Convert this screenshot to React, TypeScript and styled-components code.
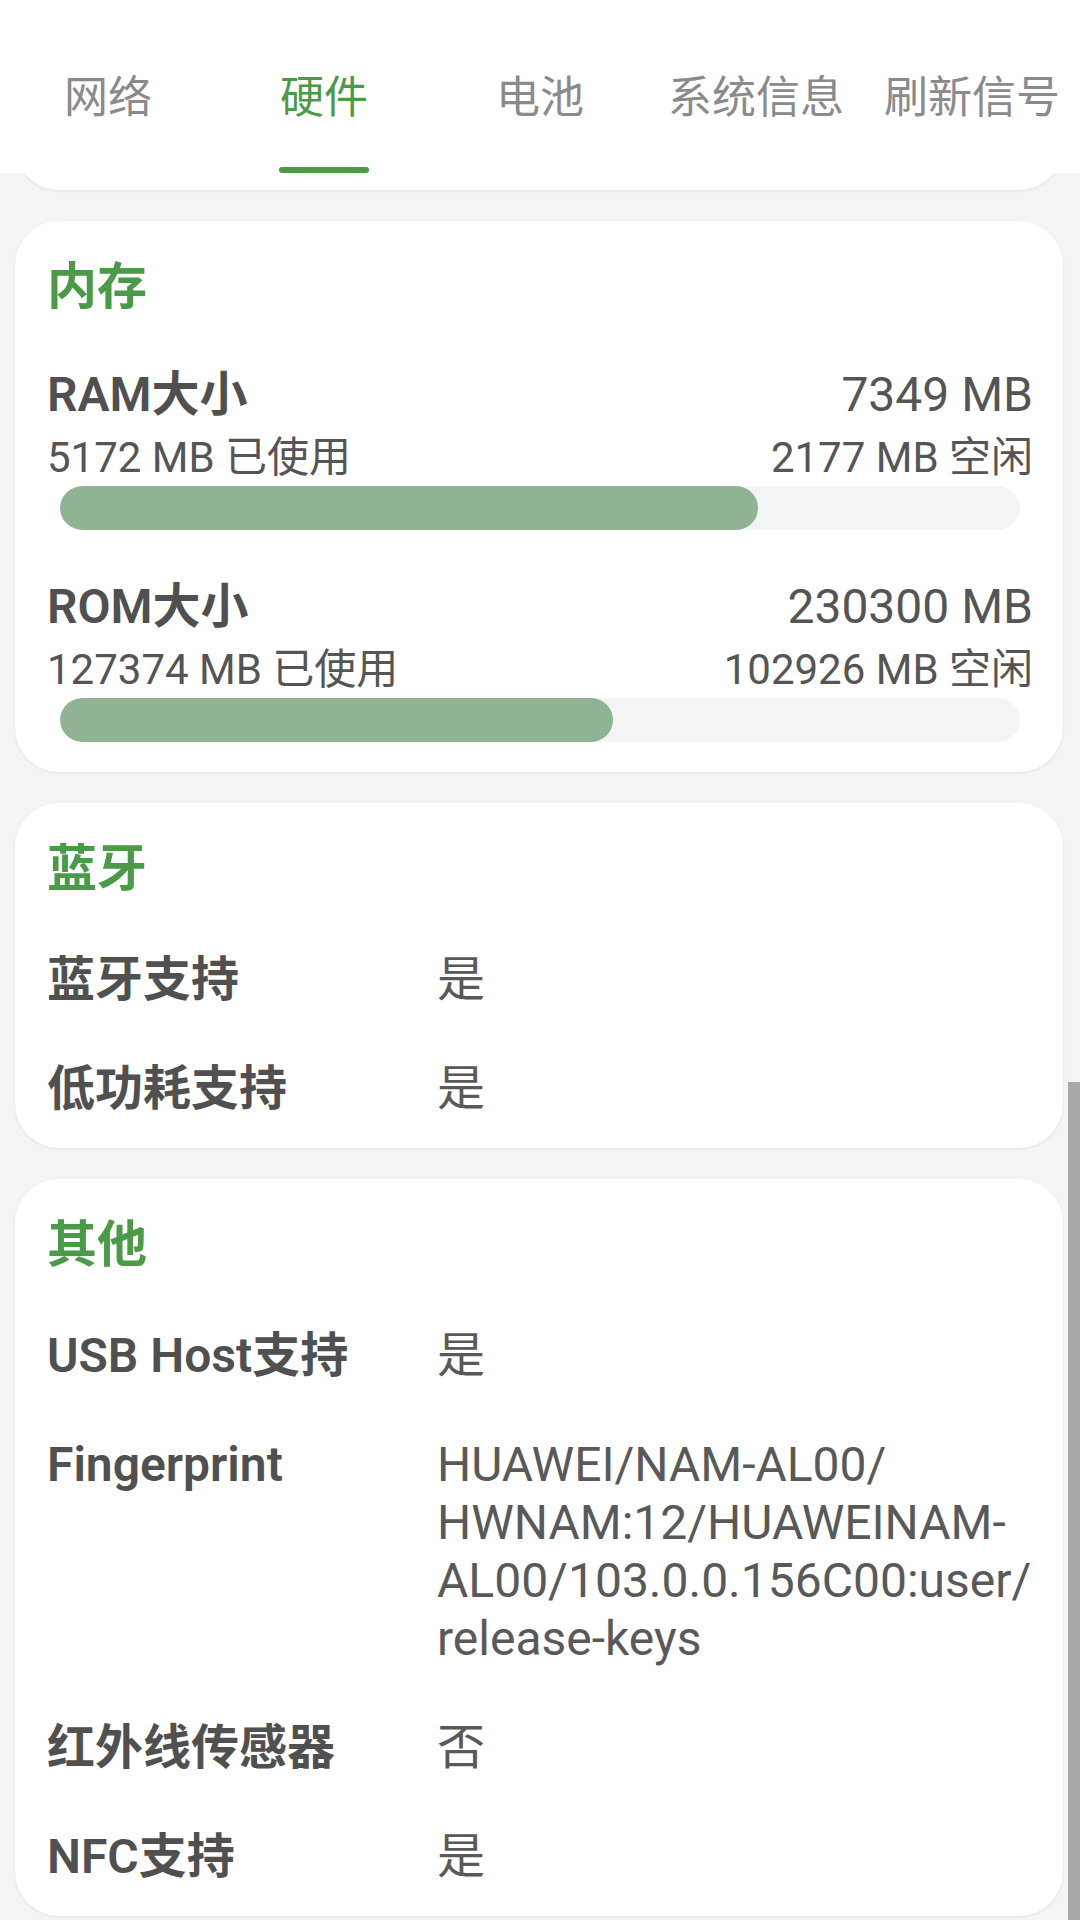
import React from "react";
import styled, { createGlobalStyle } from "styled-components";

const GlobalStyle = createGlobalStyle`
  html, body {
    margin: 0;
    padding: 0;
    background: #f3f4f6;
  }
  * {
    box-sizing: border-box;
  }
  body {
    font-family: Roboto, "Noto Sans CJK SC", sans-serif;
    color: #555555;
  }
`;

const Screen = styled.div`
  position: relative;
  width: 1080px;
  height: 1920px;
  overflow: hidden;
  display: flex;
  flex-direction: column;
  background: #f3f4f6;
`;

const TabBar = styled.div`
  position: relative;
  z-index: 2;
  flex: 0 0 173px;
  display: grid;
  grid-template-columns: repeat(5, 1fr);
  background: #ffffff;
`;

const Tab = styled.div<{ $active?: boolean }>`
  display: flex;
  flex-direction: column;
  align-items: center;
  padding-top: 68px;
  font-size: 44px;
  line-height: 60px;
  white-space: nowrap;
  color: ${({ $active }) => ($active ? "#4a9a48" : "#8a8a8a")};
`;

const Indicator = styled.div`
  margin-top: 39px;
  width: 90px;
  height: 6px;
  border-radius: 3px;
  background: #4a9a48;
`;

const Content = styled.div`
  flex: 1;
  overflow: hidden;
  display: flex;
  flex-direction: column;
  gap: 31px;
  padding: 0 17px 0 15px;
`;

const Card = styled.section`
  background: #ffffff;
  border-radius: 44px;
  box-shadow: 0 1px 3px rgba(0, 0, 0, 0.08);
  padding: 33px 30px 30px 32px;
  flex-shrink: 0;
`;

const ScrolledCard = styled(Card)`
  height: 100px;
  margin-top: -83px;
`;

const CardTitle = styled.h2<{ $gap: number }>`
  margin: 0 0 ${({ $gap }) => $gap}px;
  font-size: 50px;
  line-height: 66px;
  font-weight: 700;
  color: #4a9a48;
`;

const MemList = styled.div`
  display: flex;
  flex-direction: column;
  gap: 46px;
`;

const MemBlock = styled.div`
  display: flex;
  flex-direction: column;
`;

const SplitRow = styled.div<{ $sub?: boolean }>`
  display: flex;
  justify-content: space-between;
  align-items: center;
  font-size: ${({ $sub }) => ($sub ? 42 : 48)}px;
  line-height: ${({ $sub }) => ($sub ? 56 : 62)}px;
  margin-top: ${({ $sub }) => ($sub ? 4 : 0)}px;
  color: #555555;
`;

const StrongLabel = styled.span`
  font-weight: 600;
  color: #505050;
`;

const Track = styled.div`
  margin: 0 13px;
  height: 44px;
  border-radius: 22px;
  background: #f3f4f6;
  overflow: hidden;
`;

const Fill = styled.div`
  height: 100%;
  border-radius: 22px;
  background: #90b393;
`;

const InfoList = styled.div`
  display: flex;
  flex-direction: column;
  gap: 51px;
`;

const InfoRow = styled.div`
  display: grid;
  grid-template-columns: 390px 1fr;
  font-size: 48px;
  line-height: 58px;
`;

const InfoLabel = styled.div`
  font-weight: 600;
  color: #505050;
  white-space: nowrap;
`;

const InfoValue = styled.div`
  color: #595959;
`;

const ValueLine = styled.span`
  display: block;
`;

const ScrollThumb = styled.div`
  position: absolute;
  right: 0;
  top: 1082px;
  bottom: 0;
  width: 12px;
  background: #a9a9a9;
`;

const tabs = ["网络", "硬件", "电池", "系统信息", "刷新信号"];

const memory = [
  { name: "RAM大小", total: "7349 MB", used: "5172 MB 已使用", free: "2177 MB 空闲", pct: 72.7 },
  { name: "ROM大小", total: "230300 MB", used: "127374 MB 已使用", free: "102926 MB 空闲", pct: 57.6 },
];

const bluetooth = [
  { label: "蓝牙支持", value: ["是"] },
  { label: "低功耗支持", value: ["是"] },
];

const others = [
  { label: "USB Host支持", value: ["是"] },
  {
    label: "Fingerprint",
    value: ["HUAWEI/NAM-AL00/", "HWNAM:12/HUAWEINAM-", "AL00/103.0.0.156C00:user/", "release-keys"],
  },
  { label: "红外线传感器", value: ["否"] },
  { label: "NFC支持", value: ["是"] },
];

function InfoCard({ title, rows }: { title: string; rows: { label: string; value: string[] }[] }) {
  return (
    <Card>
      <CardTitle $gap={49}>{title}</CardTitle>
      <InfoList>
        {rows.map((r) => (
          <InfoRow key={r.label}>
            <InfoLabel>{r.label}</InfoLabel>
            <InfoValue>
              {r.value.map((line) => (
                <ValueLine key={line}>{line}</ValueLine>
              ))}
            </InfoValue>
          </InfoRow>
        ))}
      </InfoList>
    </Card>
  );
}

export default function App() {
  return (
    <Screen>
      <GlobalStyle />
      <TabBar>
        {tabs.map((t, i) => (
          <Tab key={t} $active={i === 1}>
            {t}
            {i === 1 && <Indicator />}
          </Tab>
        ))}
      </TabBar>
      <Content>
        <ScrolledCard />
        <Card>
          <CardTitle $gap={44}>内存</CardTitle>
          <MemList>
            {memory.map((m) => (
              <MemBlock key={m.name}>
                <SplitRow>
                  <StrongLabel>{m.name}</StrongLabel>
                  <span>{m.total}</span>
                </SplitRow>
                <SplitRow $sub>
                  <span>{m.used}</span>
                  <span>{m.free}</span>
                </SplitRow>
                <Track>
                  <Fill style={{ width: `${m.pct}%` }} />
                </Track>
              </MemBlock>
            ))}
          </MemList>
        </Card>
        <InfoCard title="蓝牙" rows={bluetooth} />
        <InfoCard title="其他" rows={others} />
      </Content>
      <ScrollThumb />
    </Screen>
  );
}
